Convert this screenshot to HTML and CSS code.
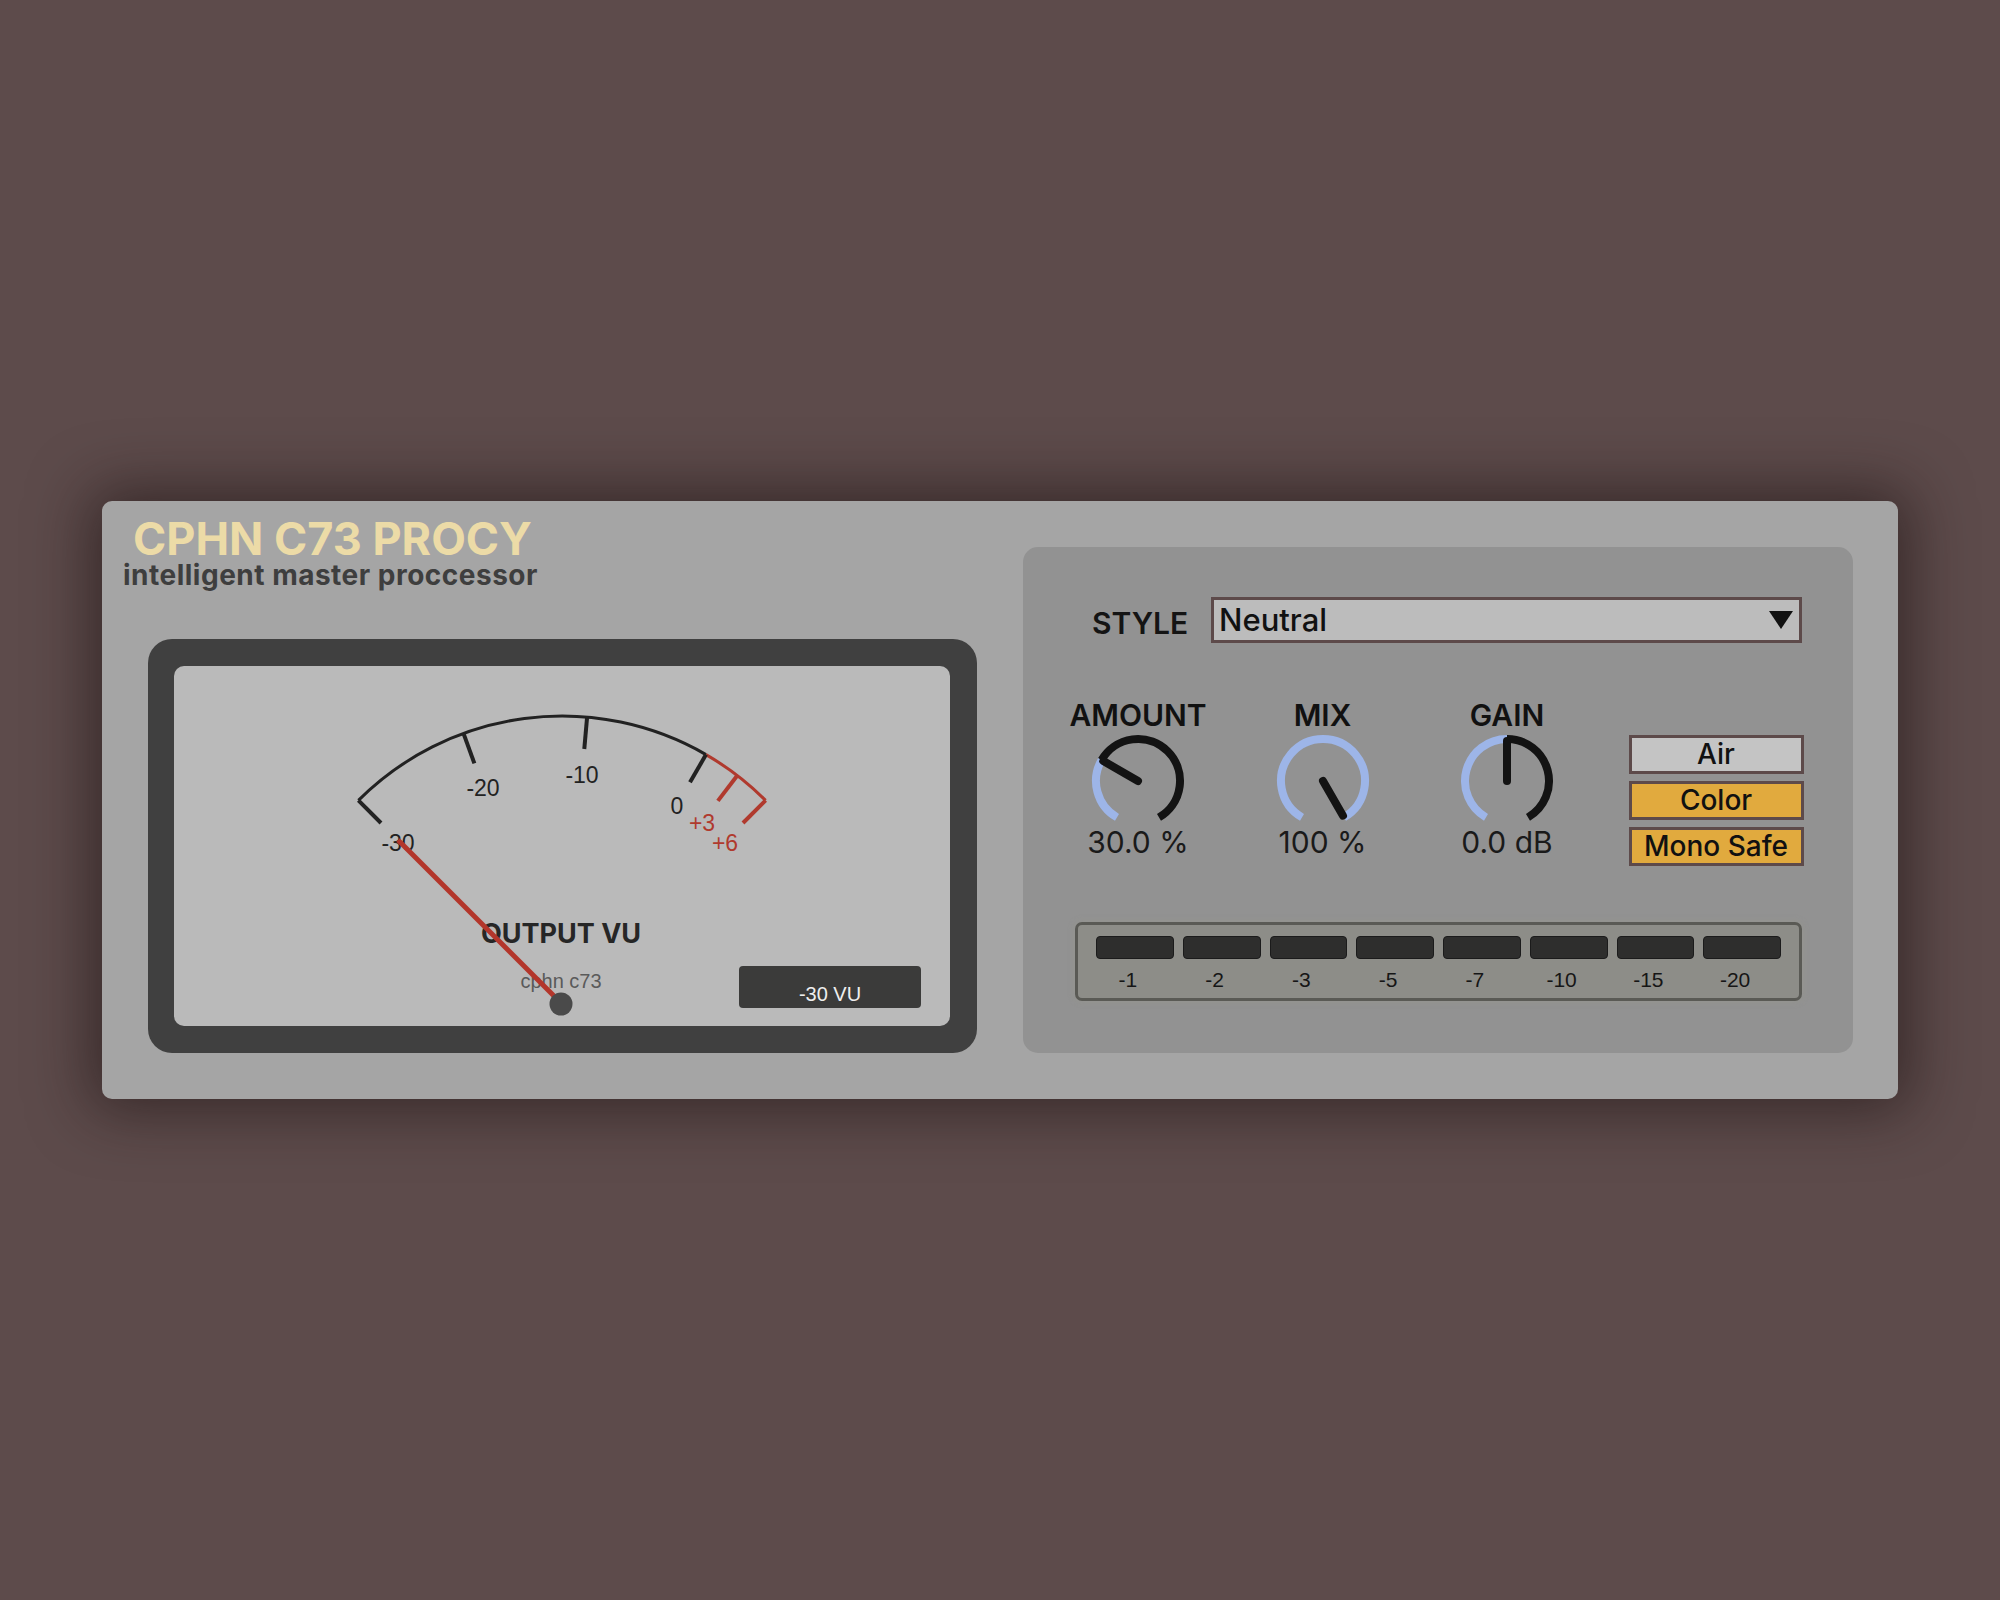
FILE: index.html
```html
<!DOCTYPE html>
<html lang="en">
<head>
  <meta charset="UTF-8">
  <title>CPHN C73 PROCY</title>
  <link rel="stylesheet" href="styles.css">
</head>
<body>
  <div class="device">
    <div class="left">
      <div class="title">CPHN C73 PROCY</div>
      <div class="subtitle">intelligent master proccessor</div>

      <div class="vu">
        <div class="vu-face">
          <svg class="vu-scale" width="776" height="360" viewBox="0 0 776 360">
            <path d="M184.4 134.4 A288 288 0 0 1 532 88.6" class="arc"/>
            <path d="M532 88.6 A288 288 0 0 1 591.6 134.4" class="arc red"/>
            <line x1="184.4" y1="134.4" x2="207" y2="157" class="tick"/>
            <line x1="289.5" y1="67.4" x2="300.4" y2="97.4" class="tick"/>
            <line x1="413.1" y1="51.1" x2="410.3" y2="83" class="tick"/>
            <line x1="532" y1="88.6" x2="516" y2="116.3" class="tick"/>
            <line x1="563.3" y1="109.5" x2="543.9" y2="134.9" class="tick red"/>
            <line x1="591.6" y1="134.4" x2="569" y2="157" class="tick red"/>
            <text x="224" y="185" class="num">-30</text>
            <text x="309" y="130" class="num">-20</text>
            <text x="408" y="117" class="num">-10</text>
            <text x="503" y="148" class="num">0</text>
            <text x="528" y="165" class="num hot">+3</text>
            <text x="551" y="185" class="num hot">+6</text>
            <text x="387" y="277" class="vu-title">OUTPUT VU</text>
            <text x="387" y="322" class="vu-brand">cphn c73</text>
            <line x1="388" y1="338" x2="224" y2="174" class="needle"/>
            <circle cx="387" cy="338" r="11.5" class="pivot"/>
          </svg>
          <div class="readout">-30 VU</div>
        </div>
      </div>
    </div>

    <div class="rack">
      <div class="style-row">
        <div class="style-label">STYLE</div>
        <div class="select">
          <span>Neutral</span>
          <svg width="24" height="18" viewBox="0 0 24 18"><polygon points="0,0 24,0 12,18" fill="#111"/></svg>
        </div>
      </div>

      <div class="knob-row">
        <div class="knob">
          <div class="knob-label">AMOUNT</div>
          <svg width="96" height="96" viewBox="0 0 96 96">
            <path d="M27 84.37 A42 42 0 0 1 11.63 27" class="dial-on"/>
            <path d="M11.63 27 A42 42 0 1 1 69 84.37" class="dial-off"/>
            <line x1="48" y1="48" x2="13.36" y2="28" class="pointer"/>
          </svg>
          <div class="knob-value">30.0 %</div>
        </div>
        <div class="knob">
          <div class="knob-label">MIX</div>
          <svg width="96" height="96" viewBox="0 0 96 96">
            <path d="M27 84.37 A42 42 0 1 1 69 84.37" class="dial-on"/>
            <line x1="48" y1="48" x2="68" y2="82.64" class="pointer"/>
          </svg>
          <div class="knob-value">100 %</div>
        </div>
        <div class="knob">
          <div class="knob-label">GAIN</div>
          <svg width="96" height="96" viewBox="0 0 96 96">
            <path d="M27 84.37 A42 42 0 0 1 48 6" class="dial-on"/>
            <path d="M48 6 A42 42 0 0 1 69 84.37" class="dial-off"/>
            <line x1="48" y1="48" x2="48" y2="8" class="pointer"/>
          </svg>
          <div class="knob-value">0.0 dB</div>
        </div>
        <div class="toggles">
          <div class="toggle">Air</div>
          <div class="toggle on">Color</div>
          <div class="toggle on">Mono Safe</div>
        </div>
      </div>

      <div class="leds">
        <div class="led-cell"><div class="led"></div><div class="led-label">-1</div></div>
        <div class="led-cell"><div class="led"></div><div class="led-label">-2</div></div>
        <div class="led-cell"><div class="led"></div><div class="led-label">-3</div></div>
        <div class="led-cell"><div class="led"></div><div class="led-label">-5</div></div>
        <div class="led-cell"><div class="led"></div><div class="led-label">-7</div></div>
        <div class="led-cell"><div class="led"></div><div class="led-label">-10</div></div>
        <div class="led-cell"><div class="led"></div><div class="led-label">-15</div></div>
        <div class="led-cell"><div class="led"></div><div class="led-label">-20</div></div>
      </div>
    </div>
  </div>
</body>
</html>
```

FILE: styles.css
```css
body {
  margin: 0;
  height: 1600px;
  background-color: #5d4b4b;
  display: flex;
  justify-content: center;
  align-items: center;
  font-family: Inter, 'Liberation Sans', sans-serif;
}

.device {
  width: 1796px;
  height: 598px;
  box-sizing: border-box;
  padding: 16px 45px 46px 21px;
  background-color: #a5a5a5;
  border-radius: 10px;
  box-shadow: 0 0 60px 12px rgba(25, 15, 15, 0.55);
  display: grid;
  grid-template-columns: 854px 830px;
  column-gap: 46px;
}

.left {
  display: flex;
  flex-direction: column;
}

.title {
  padding-left: 10px;
  font-size: 45px;
  font-weight: 700;
  line-height: 44px;
  color: #ecdba7;
}

.subtitle {
  font-size: 28px;
  font-weight: 700;
  line-height: 28px;
  letter-spacing: 0.5px;
  color: #3e3e3e;
}

/* vu meter */
.vu {
  margin-top: auto;
  margin-left: 25px;
  width: 829px;
  height: 414px;
  box-sizing: border-box;
  padding: 27px 27px 27px 26px;
  background-color: #404040;
  border-radius: 24px;
}

.vu-face {
  width: 776px;
  height: 360px;
  background-color: #bababa;
  border-radius: 10px;
  display: grid;
}

.vu-face > * {
  grid-area: 1 / 1;
}

.vu-scale {
  display: block;
}

.arc {
  fill: none;
  stroke: #222;
  stroke-width: 3;
}

.tick {
  stroke: #222;
  stroke-width: 4;
}

.arc.red,
.tick.red {
  stroke: #b03a2e;
}

.num {
  font-family: 'Liberation Sans', Arial, sans-serif;
  font-size: 23px;
  fill: #222;
  text-anchor: middle;
}

.num.hot {
  fill: #b03a2e;
}

.vu-title {
  font-family: Inter, sans-serif;
  font-size: 27px;
  font-weight: 700;
  fill: #262626;
  text-anchor: middle;
}

.vu-brand {
  font-family: 'Liberation Sans', Arial, sans-serif;
  font-size: 20px;
  fill: #5a5a5a;
  text-anchor: middle;
}

.needle {
  stroke: #b3362b;
  stroke-width: 5;
}

.pivot {
  fill: #4a4a4a;
}

.readout {
  align-self: end;
  justify-self: end;
  margin: 0 29px 18px 0;
  width: 182px;
  height: 42px;
  box-sizing: border-box;
  padding-top: 18px;
  background-color: #3b3b3a;
  border-radius: 4px;
  color: #eee;
  font-family: 'Liberation Sans', Arial, sans-serif;
  font-size: 20px;
  line-height: 20px;
  text-align: center;
}

/* right side */
.rack {
  margin-top: 30px;
  height: 506px;
  box-sizing: border-box;
  padding: 50px 51px 52px 52px;
  background-color: #929292;
  border-radius: 15px;
  display: flex;
  flex-direction: column;
}

.style-row {
  display: flex;
  align-items: center;
  height: 46px;
}

.style-label {
  width: 119px;
  padding-left: 17px;
  margin-top: 6px;
  font-size: 30px;
  font-weight: 600;
  line-height: 30px;
  color: #141414;
}

.select {
  flex: 1;
  height: 46px;
  box-sizing: border-box;
  border: 3px solid #5d4a4a;
  background-color: #bcbcbc;
  padding: 0 6px 0 5px;
  display: flex;
  align-items: center;
  justify-content: space-between;
  font-size: 31px;
  font-weight: 500;
  line-height: 40px;
  color: #111;
}

.select svg {
  display: block;
}

.knob-row {
  margin-top: 57px;
  display: grid;
  grid-template-columns: repeat(3, 126px) 1fr;
  column-gap: 58.5px;
  align-items: start;
}

.knob {
  display: flex;
  flex-direction: column;
  align-items: center;
}

.knob-label {
  font-size: 30px;
  font-weight: 600;
  line-height: 30px;
  color: #111;
}

.knob svg {
  display: block;
  margin-top: 3px;
}

.dial-on,
.dial-off {
  fill: none;
  stroke-width: 8;
}

.dial-on {
  stroke: #9db5e8;
}

.dial-off {
  stroke: #131313;
}

.pointer {
  stroke: #131313;
  stroke-width: 8;
  stroke-linecap: round;
}

.knob-value {
  margin-top: -2px;
  font-size: 30px;
  line-height: 30px;
  color: #1a1a1a;
}

.toggles {
  justify-self: end;
  width: 175px;
  margin-right: 2px;
  padding-top: 35px;
  display: flex;
  flex-direction: column;
  gap: 7px;
}

.toggle {
  height: 39px;
  box-sizing: border-box;
  border: 3px solid #5d4a4a;
  background-color: #c4c4c4;
  font-size: 28px;
  font-weight: 500;
  line-height: 33px;
  text-align: center;
  color: #111;
}

.toggle.on {
  background-color: #e1aa3e;
}

/* led ladder */
.leds {
  margin-top: 56px;
  height: 79px;
  box-sizing: border-box;
  padding: 11px 18px 0;
  border: 3px solid #5a5a55;
  border-radius: 7px;
  background-color: #8d8d88;
  box-shadow: 0 0 4px 3px rgba(150, 150, 140, 0.35);
  display: grid;
  grid-template-columns: repeat(8, 1fr);
  column-gap: 9px;
}

.led-cell {
  display: flex;
  flex-direction: column;
  align-items: center;
}

.led {
  width: 100%;
  height: 23px;
  box-sizing: border-box;
  background-color: #2e2e2d;
  border: 1.5px solid #1b1b1b;
  border-radius: 4px;
}

.led-label {
  margin-top: 9.5px;
  padding-right: 14px;
  font-family: 'Liberation Sans', Arial, sans-serif;
  font-size: 21px;
  line-height: 21px;
  color: #161616;
}
```
